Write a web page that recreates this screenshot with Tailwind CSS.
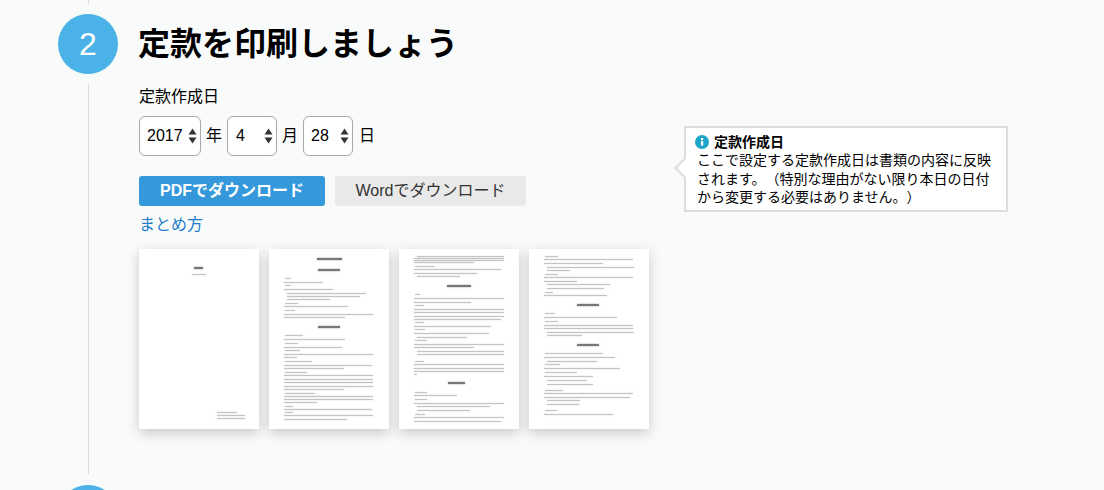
<!DOCTYPE html>
<html lang="ja">

<head>
    <meta charset="UTF-8">
    <title>定款を印刷しましょう</title>
    <script src="https://cdn.jsdelivr.net/npm/@tailwindcss/browser@4"></script>
</head>

<body class="bg-[#f9fbfb] h-[490px] overflow-hidden text-black font-['Liberation_Sans','Noto_Sans_CJK_JP',sans-serif]">
    <div class="relative flex pl-[58px] h-[490px] overflow-hidden">
        <!-- Step rail -->
        <div class="flex flex-col items-center w-[60px] shrink-0">
            <div class="w-px h-[4px] shrink-0 bg-[#dddddd]"></div>
            <div class="w-[60px] h-[60px] mt-[10px] shrink-0 rounded-full bg-[#4ab2e7] text-white text-[32px] flex items-center justify-center">2</div>
            <div class="w-px h-[390px] mt-[10px] shrink-0 bg-[#dddddd]"></div>
            <div class="w-[60px] h-[60px] mt-[11px] shrink-0 rounded-full bg-[#4ab2e7]"></div>
        </div>

        <!-- Step body -->
        <div class="ml-[21px]">
            <h2 class="mt-[20px] -ml-[1px] text-[32px] leading-[48px] font-bold">定款を印刷しましょう</h2>
            <p class="mt-[17px] text-base leading-[24px]">定款作成日</p>

            <div class="flex items-center mt-[7px] h-[40px] text-base">
                <div class="relative w-[62px] h-[40px]">
                    <select class="appearance-none w-full h-full bg-white border border-[#a9a9a9] rounded-[6px] pl-[7px] outline-none">
                        <option>2017</option>
                    </select>
                    <svg class="absolute right-[4px] top-[12px] w-[9px] h-[16px]" viewBox="0 0 9 16"><path d="M4.5 0.5 L8.5 6.5 H0.5 Z M4.5 15.5 L8.5 9.5 H0.5 Z" fill="#333"/></svg>
                </div>
                <span class="ml-[5px] w-[21px]">年</span>
                <div class="relative w-[50px] h-[40px]">
                    <select class="appearance-none w-full h-full bg-white border border-[#a9a9a9] rounded-[6px] pl-[8px] outline-none">
                        <option>4</option>
                    </select>
                    <svg class="absolute right-[4px] top-[12px] w-[9px] h-[16px]" viewBox="0 0 9 16"><path d="M4.5 0.5 L8.5 6.5 H0.5 Z M4.5 15.5 L8.5 9.5 H0.5 Z" fill="#333"/></svg>
                </div>
                <span class="ml-[5px] w-[21px]">月</span>
                <div class="relative w-[50px] h-[40px]">
                    <select class="appearance-none w-full h-full bg-white border border-[#a9a9a9] rounded-[6px] pl-[7px] outline-none">
                        <option>28</option>
                    </select>
                    <svg class="absolute right-[4px] top-[12px] w-[9px] h-[16px]" viewBox="0 0 9 16"><path d="M4.5 0.5 L8.5 6.5 H0.5 Z M4.5 15.5 L8.5 9.5 H0.5 Z" fill="#333"/></svg>
                </div>
                <span class="ml-[6px]">日</span>
            </div>

            <div class="flex gap-[10px] mt-[20px]">
                <a class="w-[186px] h-[30px] rounded-[3px] bg-[#3498db] text-white font-bold text-base flex items-center justify-center">PDFでダウンロード</a>
                <a class="w-[191px] h-[30px] rounded-[3px] bg-[#e9e9e9] text-[#333333] text-base flex items-center justify-center">Wordでダウンロード</a>
            </div>
            <a class="block mt-[7px] text-base leading-[24px] text-[#1c7cc7]">まとめ方</a>

            <!-- Template thumbnails -->
            <div class="flex gap-[10px] mt-[12px]">
                <div class="thumb flow-root w-[120px] h-[180px] bg-white shadow-[0_4px_12px_rgba(0,0,0,0.2)] overflow-hidden"></div>
                <div class="thumb flow-root w-[120px] h-[180px] bg-white shadow-[0_4px_12px_rgba(0,0,0,0.2)] overflow-hidden"></div>
                <div class="thumb flow-root w-[120px] h-[180px] bg-white shadow-[0_4px_12px_rgba(0,0,0,0.2)] overflow-hidden"></div>
                <div class="thumb flow-root w-[120px] h-[180px] bg-white shadow-[0_4px_12px_rgba(0,0,0,0.2)] overflow-hidden"></div>
            </div>
        </div>

        <!-- Help balloon -->
        <div class="absolute left-[684px] top-[126px] w-[324px] h-[86px] bg-white border-2 border-[#dddddd] pl-[11px] pt-[5px] text-sm leading-[18.3px] [text-spacing-trim:space-all]">
            <div class="absolute left-[-9px] top-[33px] w-[14px] h-[14px] rotate-45 bg-white border-l-2 border-b-2 border-[#dddddd]"></div>
            <div class="relative flex items-center font-bold">
                <svg class="w-[14px] h-[14px] mr-[5px] ml-[-2px]" viewBox="0 0 14 14"><circle cx="7" cy="7" r="7" fill="#1ea5c9"/><rect x="6" y="6" width="2.2" height="4.6" fill="#fff"/><rect x="6" y="3" width="2.2" height="2" fill="#fff"/></svg>
                定款作成日
            </div>
            <p class="relative w-[300px]">ここで設定する定款作成日は書類の内容に反映されます。（特別な理由がない限り本日の日付から変更する必要はありません。）</p>
        </div>
    </div>

    <script>
        // [y, x, width, heading]
        const pages = [
            [[18, 55, 9, 1], [25, 53, 14], [163, 78, 20], [166, 78, 28], [169, 78, 28]],
            [[9, 48, 25, 1], [20, 49, 22, 1], [29, 16, 6], [33, 15, 39], [36, 16, 6], [40, 15, 49], [44, 18, 79], [47, 18, 73], [50, 18, 43], [54, 16, 13], [57, 15, 64], [61, 16, 10], [65, 15, 89], [68, 15, 61], [77, 49, 22, 1], [86, 16, 18], [90, 15, 61], [94, 16, 13], [98, 15, 58], [101, 16, 15], [105, 15, 89], [108, 15, 13], [112, 16, 27], [116, 15, 88], [119, 15, 60], [123, 16, 22], [126, 15, 89], [130, 15, 89], [133, 15, 89], [137, 15, 89], [140, 15, 60], [144, 16, 30], [147, 15, 89], [150, 15, 89], [153, 15, 33], [157, 16, 8], [160, 15, 88], [163, 16, 8], [166, 15, 89], [170, 15, 63]],
            [[7, 18, 87], [9, 15, 90], [11, 15, 90], [13, 15, 60], [17, 16, 20], [20, 15, 87], [24, 15, 63], [27, 18, 43], [36, 48, 24, 1], [45, 16, 5], [49, 15, 90], [53, 15, 57], [56, 16, 9], [60, 15, 90], [63, 15, 90], [67, 15, 90], [70, 15, 87], [73, 16, 9], [77, 15, 77], [80, 16, 10], [84, 15, 75], [88, 18, 50], [91, 16, 12], [95, 15, 90], [98, 15, 60], [102, 18, 87], [105, 18, 87], [112, 16, 9], [115, 15, 90], [119, 15, 90], [122, 15, 90], [125, 15, 3], [133, 49, 17, 1], [143, 16, 12], [146, 15, 43], [150, 16, 12], [154, 15, 90], [157, 18, 73], [161, 18, 53], [165, 16, 10], [168, 15, 90], [172, 15, 87]],
            [[7, 16, 13], [10, 15, 89], [14, 15, 59], [18, 18, 87], [21, 18, 23], [25, 16, 13], [28, 15, 89], [32, 15, 33], [35, 18, 63], [39, 18, 57], [43, 16, 8], [46, 15, 63], [55, 48, 22, 1], [64, 16, 10], [68, 15, 73], [72, 16, 13], [76, 15, 89], [79, 15, 89], [83, 18, 87], [86, 18, 35], [95, 48, 22, 1], [104, 16, 58], [108, 15, 71], [112, 18, 50], [115, 16, 15], [119, 15, 76], [123, 16, 32], [127, 15, 49], [131, 18, 40], [135, 18, 46], [141, 16, 18], [144, 15, 89], [148, 15, 86], [151, 18, 33], [155, 18, 32], [161, 16, 12], [165, 15, 69]]
        ];

        // Fake the tiny page text as thin grey rows
        document.querySelectorAll('.thumb').forEach((holder, i) => {
            let bottom = 0;
            pages[i].forEach(([y, x, w, heading]) => {
                const h = heading ? 2 : 1;
                const row = document.createElement('div');
                row.className = heading
                    ? 'bg-[#777777] shadow-[0_0_2px_#999999]'
                    : 'bg-[#c4c4c4] shadow-[0_0_1.5px_#c8c8c8]';
                row.style.cssText = `margin-top:${y - bottom}px;margin-left:${x}px;width:${w}px;height:${h}px`;
                holder.appendChild(row);
                bottom = y + h;
            });
        });
    </script>
</body>

</html>
